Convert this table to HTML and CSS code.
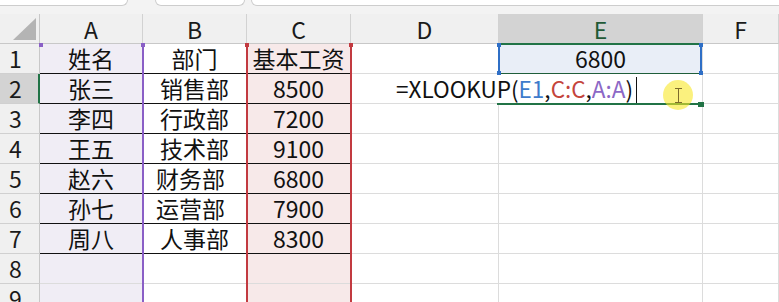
FILE: index.html
```html
<!DOCTYPE html>
<html lang="zh-CN">
<head>
<meta charset="utf-8">
<title>工资表</title>
<link rel="stylesheet" href="styles.css">
</head>
<body>
<div class="app">
  <div class="toolbar">
    <div class="field name-box"></div>
    <div class="field func-box"></div>
    <div class="field formula-box"></div>
  </div>

  <div class="sheet">
    <div class="grid">
      <!-- column headers -->
      <div class="cell corner"><span class="corner-mark"></span></div>
      <div class="cell col-head">A</div>
      <div class="cell col-head">B</div>
      <div class="cell col-head">C</div>
      <div class="cell col-head">D</div>
      <div class="cell col-head col-active">E</div>
      <div class="cell col-head">F</div>

      <!-- row 1 -->
      <div class="cell row-head">1</div>
      <div class="cell col-a tb">姓名</div>
      <div class="cell tb">部门</div>
      <div class="cell col-c tb">基本工资</div>
      <div class="cell"></div>
      <div class="cell lookup">6800</div>
      <div class="cell"></div>

      <!-- row 2 -->
      <div class="cell row-head row-active">2</div>
      <div class="cell col-a tb">张三</div>
      <div class="cell tb">销售部</div>
      <div class="cell col-c tb">8500</div>
      <div class="cell editor no-right"><span class="formula">=XLOOKUP(<span class="ref-e">E1</span>,<span class="ref-c">C:C</span>,<span class="ref-a">A:A</span>)</span><span class="caret"></span></div>
      <div class="cell"></div>
      <div class="cell"></div>

      <!-- row 3 -->
      <div class="cell row-head">3</div>
      <div class="cell col-a tb">李四</div>
      <div class="cell tb">行政部</div>
      <div class="cell col-c tb">7200</div>
      <div class="cell"></div>
      <div class="cell"></div>
      <div class="cell"></div>

      <!-- row 4 -->
      <div class="cell row-head">4</div>
      <div class="cell col-a tb">王五</div>
      <div class="cell tb">技术部</div>
      <div class="cell col-c tb">9100</div>
      <div class="cell"></div>
      <div class="cell"></div>
      <div class="cell"></div>

      <!-- row 5 -->
      <div class="cell row-head">5</div>
      <div class="cell col-a tb">赵六</div>
      <div class="cell tb nudge">财务部</div>
      <div class="cell col-c tb">6800</div>
      <div class="cell"></div>
      <div class="cell"></div>
      <div class="cell"></div>

      <!-- row 6 -->
      <div class="cell row-head">6</div>
      <div class="cell col-a tb">孙七</div>
      <div class="cell tb nudge">运营部</div>
      <div class="cell col-c tb">7900</div>
      <div class="cell"></div>
      <div class="cell"></div>
      <div class="cell"></div>

      <!-- row 7 -->
      <div class="cell row-head">7</div>
      <div class="cell col-a tb">周八</div>
      <div class="cell tb">人事部</div>
      <div class="cell col-c tb">8300</div>
      <div class="cell"></div>
      <div class="cell"></div>
      <div class="cell"></div>

      <!-- row 8 -->
      <div class="cell row-head">8</div>
      <div class="cell col-a"></div>
      <div class="cell"></div>
      <div class="cell col-c"></div>
      <div class="cell"></div>
      <div class="cell"></div>
      <div class="cell"></div>

      <!-- row 9 -->
      <div class="cell row-head">9</div>
      <div class="cell col-a"></div>
      <div class="cell"></div>
      <div class="cell col-c"></div>
      <div class="cell"></div>
      <div class="cell"></div>
      <div class="cell"></div>
    </div>

    <!-- range highlight for A:A -->
    <div class="range-line purple a-right"></div>
    <div class="handle purple a-h1"></div>
    <div class="handle purple a-h2"></div>

    <!-- range highlight for C:C -->
    <div class="range-line red c-left"></div>
    <div class="range-line red c-right"></div>
    <div class="handle red c-h1"></div>
    <div class="handle red c-h2"></div>

    <!-- range highlight for E1 -->
    <div class="range-line blue e-left"></div>
    <div class="range-line blue e-right"></div>
    <div class="handle blue e-h1"></div>
    <div class="handle blue e-h2"></div>
    <div class="handle blue e-h3"></div>
    <div class="handle blue e-h4"></div>

    <!-- active cell frame -->
    <div class="active-head-line"></div>
    <div class="active-top"></div>
    <div class="active-bottom"></div>
    <div class="fill-handle"></div>

    <!-- mouse pointer -->
    <div class="pointer-glow"></div>
    <div class="ibeam"></div>
  </div>
</div>
</body>
</html>
```

FILE: styles.css
```css
* {
  box-sizing: border-box;
}

html,
body {
  margin: 0;
  padding: 0;
}

body {
  width: 779px;
  height: 302px;
  overflow: hidden;
  background: #ffffff;
  font-family: "Noto Sans CJK SC", "Noto Sans", sans-serif;
  color: #111111;
}

.app {
  width: 779px;
  height: 302px;
  overflow: hidden;
}

/* ribbon strip with the bottom edge of the input boxes */
.toolbar {
  height: 14px;
  background: #f3f3f3;
  display: flex;
  align-items: flex-start;
}

.field {
  height: 6px;
  background: #ffffff;
  border: 1px solid #cdcdcd;
  border-top: none;
  border-radius: 0 0 6px 6px;
}

.name-box {
  margin-left: -6px;
  width: 134px;
}

.func-box {
  margin-left: 27px;
  width: 90px;
}

.formula-box {
  margin-left: 6px;
  flex: 1;
  margin-right: -10px;
}

/* worksheet */
.sheet {
  position: relative;
}

.grid {
  display: grid;
  grid-template-columns: 40px 103px 104px 104px 148px 204px 76px;
  grid-auto-rows: 30px;
}

.cell {
  border-right: 1px solid #dcdcdc;
  border-bottom: 1px solid #dcdcdc;
  display: flex;
  align-items: center;
  justify-content: center;
  font-size: 23px;
  line-height: 1;
  white-space: nowrap;
}

.corner {
  position: relative;
  background: #f0f0f0;
  border-right: 1px solid #c8c8c8;
  border-bottom: 1px solid #c8c8c8;
}

.corner-mark {
  position: absolute;
  right: 3px;
  bottom: 3px;
  width: 0;
  height: 0;
  border-left: 23px solid transparent;
  border-bottom: 22px solid #b4b4b4;
}

.col-head {
  background: #f0f0f0;
  border-right-color: #d2d2d2;
  border-bottom-color: #c8c8c8;
  color: #1a1a1a;
  padding-top: 1px;
}

.col-active {
  background: #d3d3d3;
  color: #1f5a36;
}

.row-head {
  background: #f0f0f0;
  border-right-color: #c8c8c8;
  border-bottom-color: #d0d0d0;
  justify-content: flex-start;
  padding-left: 9px;
  color: #1a1a1a;
}

.row-active {
  background: #d3d3d3;
  border-right: 2px solid #217346;
}

.col-a {
  background: #f0edf5;
}

.col-c {
  background: #f7e9e9;
}

.tb {
  border-bottom-color: #111111;
}

.nudge {
  padding-right: 8px;
}

.lookup {
  background: #e9eef7;
}

.no-right {
  border-right-color: transparent;
}

/* in-cell editor, text runs over into the next column */
.editor {
  justify-content: flex-start;
  padding-left: 45px;
  overflow: visible;
  position: relative;
  z-index: 1;
}

.formula {
  font-size: 22.5px;
  flex-shrink: 0;
}

.caret {
  flex-shrink: 0;
  display: block;
  width: 1px;
  height: 26px;
  margin-left: 3px;
  margin-top: 2px;
  background: #111111;
}

.ref-e {
  color: #3e7bcb;
}

.ref-c {
  color: #c4443b;
}

.ref-a {
  color: #8c68c6;
}

/* range outlines drawn on top of the grid */
.range-line {
  position: absolute;
  width: 2px;
  z-index: 2;
}

.handle {
  position: absolute;
  width: 4px;
  height: 4px;
  z-index: 3;
}

.purple {
  background: #8a5fc6;
}

.red {
  background: #c23a40;
}

.blue {
  background: #2f6fc6;
}

.a-right {
  left: 142px;
  top: 30px;
  height: 300px;
}

.a-h1 {
  left: 39px;
  top: 29px;
}

.a-h2 {
  left: 141px;
  top: 29px;
}

.c-left {
  left: 246px;
  top: 30px;
  height: 300px;
}

.c-right {
  left: 350px;
  top: 30px;
  height: 300px;
}

.c-h1 {
  left: 245px;
  top: 29px;
}

.c-h2 {
  left: 349px;
  top: 29px;
}

.e-left {
  left: 498px;
  top: 30px;
  height: 30px;
}

.e-right {
  left: 700px;
  top: 30px;
  height: 30px;
}

.e-h1 {
  left: 497px;
  top: 29px;
}

.e-h2 {
  left: 497px;
  top: 57px;
}

.e-h3 {
  left: 699px;
  top: 29px;
}

.e-h4 {
  left: 699px;
  top: 57px;
}

.active-head-line {
  position: absolute;
  left: 500px;
  top: 29px;
  width: 200px;
  height: 2px;
  background: #217346;
  z-index: 2;
}

.active-top {
  position: absolute;
  left: 500px;
  top: 59px;
  width: 200px;
  height: 1px;
  background: #1f5e3a;
  z-index: 2;
}

.active-bottom {
  position: absolute;
  left: 497px;
  top: 89px;
  width: 204px;
  height: 2px;
  background: #217346;
  z-index: 2;
}

.fill-handle {
  position: absolute;
  left: 698px;
  top: 88px;
  width: 6px;
  height: 5px;
  background: #217346;
  z-index: 3;
}

.pointer-glow {
  position: absolute;
  left: 663px;
  top: 66px;
  width: 30px;
  height: 30px;
  border-radius: 50%;
  background: rgba(248, 232, 40, 0.6);
  z-index: 4;
}

/* I-beam mouse pointer */
.ibeam {
  position: absolute;
  left: 675px;
  top: 74px;
  width: 7px;
  height: 15px;
  z-index: 5;
  border-top: 1px solid #7d6b2c;
  border-bottom: 1px solid #7d6b2c;
}

.ibeam::before {
  content: "";
  position: absolute;
  left: 3px;
  top: 0;
  width: 1px;
  height: 13px;
  background: #7d6b2c;
}
```
